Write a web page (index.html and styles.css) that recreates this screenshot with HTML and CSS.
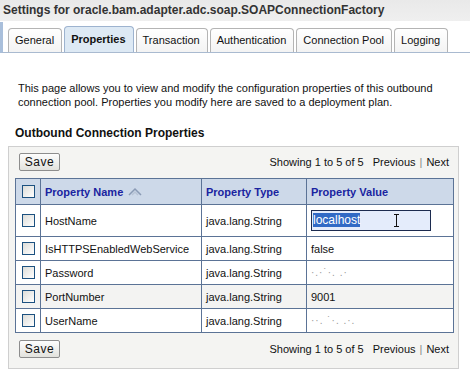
FILE: index.html
```html
<!DOCTYPE html>
<html lang="en">
<head>
    <meta charset="UTF-8">
    <title>Settings for oracle.bam.adapter.adc.soap.SOAPConnectionFactory</title>
    <link rel="stylesheet" href="styles.css">
</head>
<body>
    <div class="title-bar">Settings for oracle.bam.adapter.adc.soap.SOAPConnectionFactory</div>

    <!-- Tabs -->
    <div class="tabs">
        <span class="tab">General</span>
        <span class="tab active">Properties</span>
        <span class="tab">Transaction</span>
        <span class="tab">Authentication</span>
        <span class="tab">Connection Pool</span>
        <span class="tab">Logging</span>
    </div>

    <p class="intro">This page allows you to view and modify the configuration properties of this outbound connection pool. Properties you modify here are saved to a deployment plan.</p>

    <h3 class="section-title">Outbound Connection Properties</h3>

    <div class="panel">
        <div class="toolbar">
            <button class="btn">Save</button>
            <div class="pager">Showing 1 to 5 of 5 <span class="pager-link">Previous</span><span class="sep">|</span>Next</div>
        </div>

        <table>
            <thead>
                <tr>
                    <th class="check-col"><span class="checkbox"></span></th>
                    <th class="name-col">Property Name
                        <svg class="sort-icon" width="14" height="10" viewBox="0 0 14 10">
                            <path d="M1 8 L7 2 L13 8" fill="none" stroke="#8a9bb5" stroke-width="1.5"/>
                            <path d="M4 8 L7 5 L10 8" fill="none" stroke="#b8c4d6" stroke-width="1.5"/>
                        </svg>
                    </th>
                    <th class="type-col">Property Type</th>
                    <th>Property Value</th>
                </tr>
            </thead>
            <tbody>
                <tr class="edit-row">
                    <td class="check-col"><span class="checkbox"></span></td>
                    <td>HostName</td>
                    <td>java.lang.String</td>
                    <td>
                        <div class="value-input">
                            <span class="selected">localhost</span>
                            <span class="ibeam"></span>
                        </div>
                    </td>
                </tr>
                <tr>
                    <td class="check-col"><span class="checkbox"></span></td>
                    <td>IsHTTPSEnabledWebService</td>
                    <td>java.lang.String</td>
                    <td>false</td>
                </tr>
                <tr>
                    <td class="check-col"><span class="checkbox"></span></td>
                    <td>Password</td>
                    <td>java.lang.String</td>
                    <td class="masked">&#183;.&#183;&#729;&#183;. .&#183;</td>
                </tr>
                <tr class="alt">
                    <td class="check-col"><span class="checkbox"></span></td>
                    <td>PortNumber</td>
                    <td>java.lang.String</td>
                    <td>9001</td>
                </tr>
                <tr>
                    <td class="check-col"><span class="checkbox"></span></td>
                    <td>UserName</td>
                    <td>java.lang.String</td>
                    <td class="masked">&#183;&#183;. &#729;&#183;. .&#183;.</td>
                </tr>
            </tbody>
        </table>

        <div class="toolbar">
            <button class="btn">Save</button>
            <div class="pager">Showing 1 to 5 of 5 <span class="pager-link">Previous</span><span class="sep">|</span>Next</div>
        </div>
    </div>
</body>
</html>
```

FILE: styles.css
```css
body {
    margin: 0;
    width: 470px;
    font-family: "Liberation Sans", "DejaVu Sans", sans-serif;
    font-size: 11px;
    color: #111;
    background: #fff;
}

.title-bar {
    height: 21px;
    line-height: 21px;
    padding-left: 3px;
    font-size: 12px;
    font-weight: bold;
    color: #333;
    background: linear-gradient(#e9e9e9, #efefef);
    white-space: nowrap;
}

.tabs {
    display: flex;
    align-items: flex-end;
    gap: 2px;
    height: 30px;
    padding-left: 5px;
    border-left: 3px solid #a9bfdb;
    border-bottom: 1px solid #a9bad0;
    margin-top: 1px;
}

.tab {
    height: 23px;
    line-height: 23px;
    padding: 0 7px 0 6px;
    border: 1px solid #b4b4b4;
    border-bottom: none;
    border-radius: 4px 4px 0 0;
    background: linear-gradient(#ffffff, #f3f3f3);
    white-space: nowrap;
}

.tab.active {
    height: 25px;
    line-height: 25px;
    font-weight: bold;
    background: #dde9f4;
    border-color: #9db3cf;
}

.intro {
    margin: 28px 0 0 18px;
    width: 430px;
    line-height: 14px;
}

.section-title {
    margin: 17px 0 6px 15px;
    font-size: 12px;
    font-weight: bold;
}

.panel {
    margin-left: 8px;
    width: 449px;
    padding: 6px 0 10px 0;
    background: #f4f4f2;
    border: 1px solid #cfcfcf;
}

.toolbar {
    display: flex;
    justify-content: space-between;
    align-items: center;
    padding: 0 9px 0 10px;
}

.btn {
    height: 18px;
    width: 41px;
    padding: 0;
    font-family: inherit;
    font-size: 12px;
    letter-spacing: 0.5px;
    color: #111;
    background: linear-gradient(#fdfdfd, #e2e2dd);
    border: 1px solid #8d8d8d;
    border-radius: 2px;
}

.pager {
    font-size: 11px;
}

.pager-link {
    margin-left: 6px;
}

.sep {
    color: #888;
    margin: 0 4px;
}

table {
    border-collapse: collapse;
    margin: 7px 0 7px 6px;
    width: 439px;
    background: #fff;
}

th, td {
    border: 1px solid #5b7396;
    padding: 0 4px;
    height: 23px;
    text-align: left;
    white-space: nowrap;
}

th {
    background: #cdd9e9;
    color: #1a24a0;
    font-weight: bold;
    font-size: 11px;
}

thead th {
    height: 25px;
}

tr.alt td {
    background: #f3f3f2;
}

.check-col {
    width: 16px;
    text-align: center;
}

.name-col {
    width: 152px;
}

.type-col {
    width: 96px;
}

.sort-icon {
    vertical-align: -1px;
    margin-left: 2px;
}

.checkbox {
    display: inline-block;
    width: 11px;
    height: 11px;
    border: 1px solid #1c5180;
    background: linear-gradient(135deg, #dcdcd8, #ffffff);
    vertical-align: middle;
}

.edit-row td {
    height: 31px;
}

.value-input {
    position: relative;
    width: 117px;
    height: 19px;
    line-height: 19px;
    border: 1px solid #1c2b4f;
    background: #e4ecfb;
    padding-left: 1px;
    font-size: 12px;
}

.selected {
    background: #316ac5;
    color: #fff;
}

.ibeam {
    position: absolute;
    left: 84px;
    top: 3px;
    width: 1px;
    height: 13px;
    background: #111;
}

.ibeam::before,
.ibeam::after {
    content: "";
    position: absolute;
    left: -2px;
    width: 5px;
    height: 1px;
    background: #111;
}

.ibeam::before { top: 0; }
.ibeam::after { bottom: 0; }

.masked {
    color: #999;
    font-size: 10px;
    letter-spacing: 1px;
}
```
